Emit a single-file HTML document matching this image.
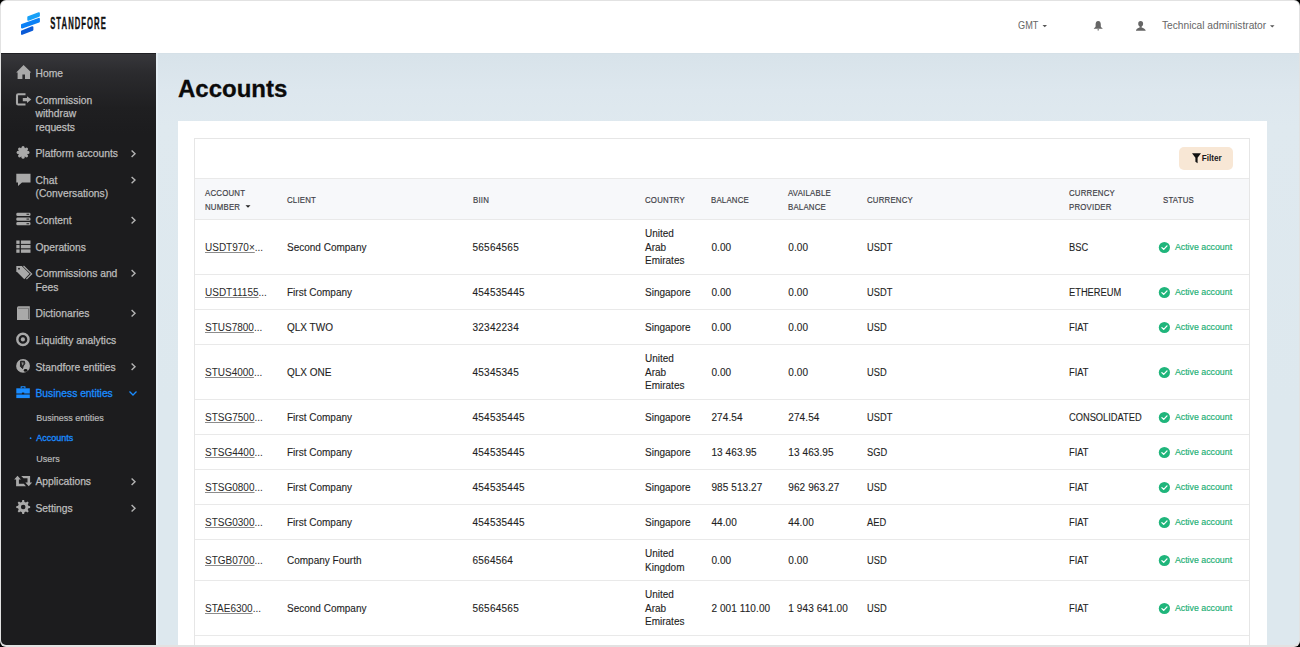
<!DOCTYPE html>
<html><head><meta charset="utf-8">
<style>
*{box-sizing:border-box;margin:0;padding:0}
html,body{width:1300px;height:647px;overflow:hidden;background:#000}
body{font-family:"Liberation Sans",sans-serif;position:relative}
.t{position:absolute;white-space:nowrap}
svg{position:absolute;left:0;top:0}
</style></head>
<body>
<div style="position:absolute;left:0px;top:0px;width:1300px;height:647px;background:#e2e2e2;border-radius:6px"></div>
<div style="position:absolute;left:1px;top:1px;width:1297.5px;height:644px;background:#dce6ed;border-radius:5px;overflow:hidden;background:linear-gradient(#d8e3ea 54px,#dde7ee 90px,#dfe9ef 125px,#dde8ee 400px)"></div>
<div style="position:absolute;left:1px;top:1px;width:1297.5px;height:51.5px;background:#ffffff;border-radius:5px 5px 0 0"></div>
<div style="position:absolute;left:1px;top:52.5px;width:155px;height:592.5px;background:#1c1c1e;border-bottom-left-radius:5px;background:linear-gradient(#38383c 0px,#2b2b2e 20px,#1f1f21 55px,#1c1c1e 80px)"></div>
<div style="position:absolute;left:156px;top:52.5px;width:2px;height:592.5px;background:#e4eef4;"></div>
<div style="position:absolute;left:158px;top:53px;width:1140.5px;height:1px;background:#d5e0e7;"></div>
<div style="position:absolute;left:1px;top:53px;width:155px;height:1px;background:#1f1f23;"></div>
<div class="t" style="left:178px;top:75.28px;font-size:24px;line-height:28px;color:#0b0b0b;font-weight:bold;-webkit-text-stroke:0.3px #0b0b0b;">Accounts</div>
<div style="position:absolute;left:178px;top:121px;width:1089px;height:524px;background:#ffffff;"></div>
<div style="position:absolute;left:194px;top:138px;width:1056px;height:1px;background:#e6e6e6;"></div>
<div style="position:absolute;left:194px;top:138px;width:1px;height:507px;background:#e6e6e6;"></div>
<div style="position:absolute;left:1249px;top:138px;width:1px;height:507px;background:#e6e6e6;"></div>
<div style="position:absolute;left:195px;top:178.5px;width:1054px;height:41px;background:#f7f8fa;"></div>
<div style="position:absolute;left:195px;top:178px;width:1054px;height:1px;background:#e9e9e9;"></div>
<div style="position:absolute;left:195px;top:219px;width:1054px;height:1px;background:#e9e9e9;"></div>
<div style="position:absolute;left:195px;top:274px;width:1054px;height:1px;background:#e9e9e9;"></div>
<div style="position:absolute;left:195px;top:309px;width:1054px;height:1px;background:#e9e9e9;"></div>
<div style="position:absolute;left:195px;top:344px;width:1054px;height:1px;background:#e9e9e9;"></div>
<div style="position:absolute;left:195px;top:399px;width:1054px;height:1px;background:#e9e9e9;"></div>
<div style="position:absolute;left:195px;top:434px;width:1054px;height:1px;background:#e9e9e9;"></div>
<div style="position:absolute;left:195px;top:469px;width:1054px;height:1px;background:#e9e9e9;"></div>
<div style="position:absolute;left:195px;top:504px;width:1054px;height:1px;background:#e9e9e9;"></div>
<div style="position:absolute;left:195px;top:539px;width:1054px;height:1px;background:#e9e9e9;"></div>
<div style="position:absolute;left:195px;top:580px;width:1054px;height:1px;background:#e9e9e9;"></div>
<div style="position:absolute;left:195px;top:635px;width:1054px;height:1px;background:#e9e9e9;"></div>
<div class="t" style="left:1017.8px;top:18.58px;font-size:10.2px;line-height:13.77px;color:#666;font-weight:normal;transform:scaleX(.9);transform-origin:0 0;">GMT</div>
<div class="t" style="left:1162px;top:18.88px;font-size:10.2px;line-height:13.77px;color:#666;font-weight:normal;">Technical administrator</div>
<div class="t" style="left:35.5px;top:67.28px;font-size:10.3px;line-height:13.91px;color:#bdbdbd;font-weight:normal;-webkit-text-stroke:0.25px #bdbdbd;">Home</div>
<div class="t" style="left:35.5px;top:93.58px;font-size:10.3px;line-height:13.91px;color:#bdbdbd;font-weight:normal;-webkit-text-stroke:0.25px #bdbdbd;">Commission</div>
<div class="t" style="left:35.5px;top:107.08px;font-size:10.3px;line-height:13.91px;color:#bdbdbd;font-weight:normal;-webkit-text-stroke:0.25px #bdbdbd;">withdraw</div>
<div class="t" style="left:35.5px;top:120.58px;font-size:10.3px;line-height:13.91px;color:#bdbdbd;font-weight:normal;-webkit-text-stroke:0.25px #bdbdbd;">requests</div>
<div class="t" style="left:35.5px;top:147.48px;font-size:10.3px;line-height:13.91px;color:#bdbdbd;font-weight:normal;-webkit-text-stroke:0.25px #bdbdbd;">Platform accounts</div>
<div class="t" style="left:35.5px;top:173.88px;font-size:10.3px;line-height:13.91px;color:#bdbdbd;font-weight:normal;-webkit-text-stroke:0.25px #bdbdbd;">Chat</div>
<div class="t" style="left:35.5px;top:187.38px;font-size:10.3px;line-height:13.91px;color:#bdbdbd;font-weight:normal;-webkit-text-stroke:0.25px #bdbdbd;">(Conversations)</div>
<div class="t" style="left:35.5px;top:213.98px;font-size:10.3px;line-height:13.91px;color:#bdbdbd;font-weight:normal;-webkit-text-stroke:0.25px #bdbdbd;">Content</div>
<div class="t" style="left:35.5px;top:241.08px;font-size:10.3px;line-height:13.91px;color:#bdbdbd;font-weight:normal;-webkit-text-stroke:0.25px #bdbdbd;">Operations</div>
<div class="t" style="left:35.5px;top:267.08px;font-size:10.3px;line-height:13.91px;color:#bdbdbd;font-weight:normal;-webkit-text-stroke:0.25px #bdbdbd;">Commissions and</div>
<div class="t" style="left:35.5px;top:280.58px;font-size:10.3px;line-height:13.91px;color:#bdbdbd;font-weight:normal;-webkit-text-stroke:0.25px #bdbdbd;">Fees</div>
<div class="t" style="left:35.5px;top:307.08px;font-size:10.3px;line-height:13.91px;color:#bdbdbd;font-weight:normal;-webkit-text-stroke:0.25px #bdbdbd;">Dictionaries</div>
<div class="t" style="left:35.5px;top:334.18px;font-size:10.3px;line-height:13.91px;color:#bdbdbd;font-weight:normal;-webkit-text-stroke:0.25px #bdbdbd;">Liquidity analytics</div>
<div class="t" style="left:35.5px;top:360.58px;font-size:10.3px;line-height:13.91px;color:#bdbdbd;font-weight:normal;-webkit-text-stroke:0.25px #bdbdbd;">Standfore entities</div>
<div class="t" style="left:35.5px;top:475.48px;font-size:10.3px;line-height:13.91px;color:#bdbdbd;font-weight:normal;-webkit-text-stroke:0.25px #bdbdbd;">Applications</div>
<div class="t" style="left:35.5px;top:502.08px;font-size:10.3px;line-height:13.91px;color:#bdbdbd;font-weight:normal;-webkit-text-stroke:0.25px #bdbdbd;">Settings</div>
<div class="t" style="left:35.5px;top:386.98px;font-size:10.3px;line-height:13.91px;color:#1a8cff;font-weight:normal;-webkit-text-stroke:0.3px #1a8cff;">Business entities</div>
<div class="t" style="left:36.3px;top:411.81px;font-size:9px;line-height:12.15px;color:#b8b8b8;font-weight:normal;-webkit-text-stroke:0.2px #b8b8b8;">Business entities</div>
<div class="t" style="left:36.3px;top:432.21px;font-size:9px;line-height:12.15px;color:#1a8cff;font-weight:normal;-webkit-text-stroke:0.3px #1a8cff;">Accounts</div>
<div class="t" style="left:36.3px;top:452.61px;font-size:9px;line-height:12.15px;color:#b8b8b8;font-weight:normal;-webkit-text-stroke:0.2px #b8b8b8;">Users</div>
<div style="position:absolute;left:1179.3px;top:146.6px;width:53.7px;height:23px;background:#f8e7d5;border-radius:5px"></div>
<div class="t" style="left:1201.7px;top:152.72px;font-size:8.2px;line-height:11.07px;color:#1a1a1a;font-weight:bold;">Filter</div>
<div class="t" style="left:205px;top:186.09px;font-size:9.8px;line-height:13.23px;color:#3f3f47;font-weight:normal;transform:scaleX(.8);transform-origin:0 0;letter-spacing:0.25px;-webkit-text-stroke:0.2px #3f3f47;">ACCOUNT</div>
<div class="t" style="left:205px;top:199.59px;font-size:9.8px;line-height:13.23px;color:#3f3f47;font-weight:normal;transform:scaleX(.8);transform-origin:0 0;letter-spacing:0.25px;-webkit-text-stroke:0.2px #3f3f47;">NUMBER</div>
<div class="t" style="left:287px;top:192.99px;font-size:9.8px;line-height:13.23px;color:#3f3f47;font-weight:normal;transform:scaleX(.8);transform-origin:0 0;letter-spacing:0.25px;-webkit-text-stroke:0.2px #3f3f47;">CLIENT</div>
<div class="t" style="left:472.5px;top:192.99px;font-size:9.8px;line-height:13.23px;color:#3f3f47;font-weight:normal;transform:scaleX(.8);transform-origin:0 0;letter-spacing:0.25px;-webkit-text-stroke:0.2px #3f3f47;">BIIN</div>
<div class="t" style="left:645px;top:192.99px;font-size:9.8px;line-height:13.23px;color:#3f3f47;font-weight:normal;transform:scaleX(.8);transform-origin:0 0;letter-spacing:0.25px;-webkit-text-stroke:0.2px #3f3f47;">COUNTRY</div>
<div class="t" style="left:711.4px;top:192.99px;font-size:9.8px;line-height:13.23px;color:#3f3f47;font-weight:normal;transform:scaleX(.8);transform-origin:0 0;letter-spacing:0.25px;-webkit-text-stroke:0.2px #3f3f47;">BALANCE</div>
<div class="t" style="left:788.3px;top:186.09px;font-size:9.8px;line-height:13.23px;color:#3f3f47;font-weight:normal;transform:scaleX(.8);transform-origin:0 0;letter-spacing:0.25px;-webkit-text-stroke:0.2px #3f3f47;">AVAILABLE</div>
<div class="t" style="left:788.3px;top:199.59px;font-size:9.8px;line-height:13.23px;color:#3f3f47;font-weight:normal;transform:scaleX(.8);transform-origin:0 0;letter-spacing:0.25px;-webkit-text-stroke:0.2px #3f3f47;">BALANCE</div>
<div class="t" style="left:866.8px;top:192.99px;font-size:9.8px;line-height:13.23px;color:#3f3f47;font-weight:normal;transform:scaleX(.8);transform-origin:0 0;letter-spacing:0.25px;-webkit-text-stroke:0.2px #3f3f47;">CURRENCY</div>
<div class="t" style="left:1068.5px;top:186.09px;font-size:9.8px;line-height:13.23px;color:#3f3f47;font-weight:normal;transform:scaleX(.8);transform-origin:0 0;letter-spacing:0.25px;-webkit-text-stroke:0.2px #3f3f47;">CURRENCY</div>
<div class="t" style="left:1068.5px;top:199.59px;font-size:9.8px;line-height:13.23px;color:#3f3f47;font-weight:normal;transform:scaleX(.8);transform-origin:0 0;letter-spacing:0.25px;-webkit-text-stroke:0.2px #3f3f47;">PROVIDER</div>
<div class="t" style="left:1162.6px;top:192.99px;font-size:9.8px;line-height:13.23px;color:#3f3f47;font-weight:normal;transform:scaleX(.8);transform-origin:0 0;letter-spacing:0.25px;-webkit-text-stroke:0.2px #3f3f47;">STATUS</div>
<div class="t" style="left:205px;top:240.84px;font-size:10px;line-height:13.5px;color:#2a2a2a;font-weight:normal;"><span style="text-decoration:underline;text-decoration-color:#8c8c8c;text-underline-offset:0.6px">USDT970×</span>...</div>
<div class="t" style="left:287px;top:240.84px;font-size:10px;line-height:13.5px;color:#1f1f1f;font-weight:normal;-webkit-text-stroke:0.12px #1f1f1f;">Second Company</div>
<div class="t" style="left:472.5px;top:240.84px;font-size:10px;line-height:13.5px;color:#1f1f1f;font-weight:normal;-webkit-text-stroke:0.12px #1f1f1f;letter-spacing:0.25px">56564565</div>
<div class="t" style="left:645px;top:227.34px;font-size:10px;line-height:13.5px;color:#1f1f1f;font-weight:normal;-webkit-text-stroke:0.12px #1f1f1f;">United</div>
<div class="t" style="left:645px;top:240.84px;font-size:10px;line-height:13.5px;color:#1f1f1f;font-weight:normal;-webkit-text-stroke:0.12px #1f1f1f;">Arab</div>
<div class="t" style="left:645px;top:254.34px;font-size:10px;line-height:13.5px;color:#1f1f1f;font-weight:normal;-webkit-text-stroke:0.12px #1f1f1f;">Emirates</div>
<div class="t" style="left:711.4px;top:240.84px;font-size:10px;line-height:13.5px;color:#1f1f1f;font-weight:normal;-webkit-text-stroke:0.12px #1f1f1f;letter-spacing:0.1px">0.00</div>
<div class="t" style="left:788.3px;top:240.84px;font-size:10px;line-height:13.5px;color:#1f1f1f;font-weight:normal;-webkit-text-stroke:0.12px #1f1f1f;letter-spacing:0.1px">0.00</div>
<div class="t" style="left:866.8px;top:240.84px;font-size:10px;line-height:13.5px;color:#1f1f1f;font-weight:normal;-webkit-text-stroke:0.12px #1f1f1f;transform:scaleX(.93);transform-origin:0 0;">USDT</div>
<div class="t" style="left:1068.5px;top:240.84px;font-size:10px;line-height:13.5px;color:#1f1f1f;font-weight:normal;-webkit-text-stroke:0.12px #1f1f1f;transform:scaleX(.93);transform-origin:0 0;">BSC</div>
<div class="t" style="left:1174.9px;top:242.06px;font-size:8.8px;line-height:11.88px;color:#18ae72;font-weight:normal;-webkit-text-stroke:0.15px #18ae72">Active account</div>
<div class="t" style="left:205px;top:285.84px;font-size:10px;line-height:13.5px;color:#2a2a2a;font-weight:normal;"><span style="text-decoration:underline;text-decoration-color:#8c8c8c;text-underline-offset:0.6px">USDT11155</span>...</div>
<div class="t" style="left:287px;top:285.84px;font-size:10px;line-height:13.5px;color:#1f1f1f;font-weight:normal;-webkit-text-stroke:0.12px #1f1f1f;">First Company</div>
<div class="t" style="left:472.5px;top:285.84px;font-size:10px;line-height:13.5px;color:#1f1f1f;font-weight:normal;-webkit-text-stroke:0.12px #1f1f1f;letter-spacing:0.25px">454535445</div>
<div class="t" style="left:645px;top:285.84px;font-size:10px;line-height:13.5px;color:#1f1f1f;font-weight:normal;-webkit-text-stroke:0.12px #1f1f1f;">Singapore</div>
<div class="t" style="left:711.4px;top:285.84px;font-size:10px;line-height:13.5px;color:#1f1f1f;font-weight:normal;-webkit-text-stroke:0.12px #1f1f1f;letter-spacing:0.1px">0.00</div>
<div class="t" style="left:788.3px;top:285.84px;font-size:10px;line-height:13.5px;color:#1f1f1f;font-weight:normal;-webkit-text-stroke:0.12px #1f1f1f;letter-spacing:0.1px">0.00</div>
<div class="t" style="left:866.8px;top:285.84px;font-size:10px;line-height:13.5px;color:#1f1f1f;font-weight:normal;-webkit-text-stroke:0.12px #1f1f1f;transform:scaleX(.93);transform-origin:0 0;">USDT</div>
<div class="t" style="left:1068.5px;top:285.84px;font-size:10px;line-height:13.5px;color:#1f1f1f;font-weight:normal;-webkit-text-stroke:0.12px #1f1f1f;transform:scaleX(.93);transform-origin:0 0;">ETHEREUM</div>
<div class="t" style="left:1174.9px;top:287.06px;font-size:8.8px;line-height:11.88px;color:#18ae72;font-weight:normal;-webkit-text-stroke:0.15px #18ae72">Active account</div>
<div class="t" style="left:205px;top:320.84px;font-size:10px;line-height:13.5px;color:#2a2a2a;font-weight:normal;"><span style="text-decoration:underline;text-decoration-color:#8c8c8c;text-underline-offset:0.6px">STUS7800</span>...</div>
<div class="t" style="left:287px;top:320.84px;font-size:10px;line-height:13.5px;color:#1f1f1f;font-weight:normal;-webkit-text-stroke:0.12px #1f1f1f;">QLX TWO</div>
<div class="t" style="left:472.5px;top:320.84px;font-size:10px;line-height:13.5px;color:#1f1f1f;font-weight:normal;-webkit-text-stroke:0.12px #1f1f1f;letter-spacing:0.25px">32342234</div>
<div class="t" style="left:645px;top:320.84px;font-size:10px;line-height:13.5px;color:#1f1f1f;font-weight:normal;-webkit-text-stroke:0.12px #1f1f1f;">Singapore</div>
<div class="t" style="left:711.4px;top:320.84px;font-size:10px;line-height:13.5px;color:#1f1f1f;font-weight:normal;-webkit-text-stroke:0.12px #1f1f1f;letter-spacing:0.1px">0.00</div>
<div class="t" style="left:788.3px;top:320.84px;font-size:10px;line-height:13.5px;color:#1f1f1f;font-weight:normal;-webkit-text-stroke:0.12px #1f1f1f;letter-spacing:0.1px">0.00</div>
<div class="t" style="left:866.8px;top:320.84px;font-size:10px;line-height:13.5px;color:#1f1f1f;font-weight:normal;-webkit-text-stroke:0.12px #1f1f1f;transform:scaleX(.93);transform-origin:0 0;">USD</div>
<div class="t" style="left:1068.5px;top:320.84px;font-size:10px;line-height:13.5px;color:#1f1f1f;font-weight:normal;-webkit-text-stroke:0.12px #1f1f1f;transform:scaleX(.93);transform-origin:0 0;">FIAT</div>
<div class="t" style="left:1174.9px;top:322.06px;font-size:8.8px;line-height:11.88px;color:#18ae72;font-weight:normal;-webkit-text-stroke:0.15px #18ae72">Active account</div>
<div class="t" style="left:205px;top:365.84px;font-size:10px;line-height:13.5px;color:#2a2a2a;font-weight:normal;"><span style="text-decoration:underline;text-decoration-color:#8c8c8c;text-underline-offset:0.6px">STUS4000</span>...</div>
<div class="t" style="left:287px;top:365.84px;font-size:10px;line-height:13.5px;color:#1f1f1f;font-weight:normal;-webkit-text-stroke:0.12px #1f1f1f;">QLX ONE</div>
<div class="t" style="left:472.5px;top:365.84px;font-size:10px;line-height:13.5px;color:#1f1f1f;font-weight:normal;-webkit-text-stroke:0.12px #1f1f1f;letter-spacing:0.25px">45345345</div>
<div class="t" style="left:645px;top:352.34px;font-size:10px;line-height:13.5px;color:#1f1f1f;font-weight:normal;-webkit-text-stroke:0.12px #1f1f1f;">United</div>
<div class="t" style="left:645px;top:365.84px;font-size:10px;line-height:13.5px;color:#1f1f1f;font-weight:normal;-webkit-text-stroke:0.12px #1f1f1f;">Arab</div>
<div class="t" style="left:645px;top:379.34px;font-size:10px;line-height:13.5px;color:#1f1f1f;font-weight:normal;-webkit-text-stroke:0.12px #1f1f1f;">Emirates</div>
<div class="t" style="left:711.4px;top:365.84px;font-size:10px;line-height:13.5px;color:#1f1f1f;font-weight:normal;-webkit-text-stroke:0.12px #1f1f1f;letter-spacing:0.1px">0.00</div>
<div class="t" style="left:788.3px;top:365.84px;font-size:10px;line-height:13.5px;color:#1f1f1f;font-weight:normal;-webkit-text-stroke:0.12px #1f1f1f;letter-spacing:0.1px">0.00</div>
<div class="t" style="left:866.8px;top:365.84px;font-size:10px;line-height:13.5px;color:#1f1f1f;font-weight:normal;-webkit-text-stroke:0.12px #1f1f1f;transform:scaleX(.93);transform-origin:0 0;">USD</div>
<div class="t" style="left:1068.5px;top:365.84px;font-size:10px;line-height:13.5px;color:#1f1f1f;font-weight:normal;-webkit-text-stroke:0.12px #1f1f1f;transform:scaleX(.93);transform-origin:0 0;">FIAT</div>
<div class="t" style="left:1174.9px;top:367.06px;font-size:8.8px;line-height:11.88px;color:#18ae72;font-weight:normal;-webkit-text-stroke:0.15px #18ae72">Active account</div>
<div class="t" style="left:205px;top:410.84px;font-size:10px;line-height:13.5px;color:#2a2a2a;font-weight:normal;"><span style="text-decoration:underline;text-decoration-color:#8c8c8c;text-underline-offset:0.6px">STSG7500</span>...</div>
<div class="t" style="left:287px;top:410.84px;font-size:10px;line-height:13.5px;color:#1f1f1f;font-weight:normal;-webkit-text-stroke:0.12px #1f1f1f;">First Company</div>
<div class="t" style="left:472.5px;top:410.84px;font-size:10px;line-height:13.5px;color:#1f1f1f;font-weight:normal;-webkit-text-stroke:0.12px #1f1f1f;letter-spacing:0.25px">454535445</div>
<div class="t" style="left:645px;top:410.84px;font-size:10px;line-height:13.5px;color:#1f1f1f;font-weight:normal;-webkit-text-stroke:0.12px #1f1f1f;">Singapore</div>
<div class="t" style="left:711.4px;top:410.84px;font-size:10px;line-height:13.5px;color:#1f1f1f;font-weight:normal;-webkit-text-stroke:0.12px #1f1f1f;letter-spacing:0.1px">274.54</div>
<div class="t" style="left:788.3px;top:410.84px;font-size:10px;line-height:13.5px;color:#1f1f1f;font-weight:normal;-webkit-text-stroke:0.12px #1f1f1f;letter-spacing:0.1px">274.54</div>
<div class="t" style="left:866.8px;top:410.84px;font-size:10px;line-height:13.5px;color:#1f1f1f;font-weight:normal;-webkit-text-stroke:0.12px #1f1f1f;transform:scaleX(.93);transform-origin:0 0;">USDT</div>
<div class="t" style="left:1068.5px;top:410.84px;font-size:10px;line-height:13.5px;color:#1f1f1f;font-weight:normal;-webkit-text-stroke:0.12px #1f1f1f;transform:scaleX(.93);transform-origin:0 0;">CONSOLIDATED</div>
<div class="t" style="left:1174.9px;top:412.06px;font-size:8.8px;line-height:11.88px;color:#18ae72;font-weight:normal;-webkit-text-stroke:0.15px #18ae72">Active account</div>
<div class="t" style="left:205px;top:445.84px;font-size:10px;line-height:13.5px;color:#2a2a2a;font-weight:normal;"><span style="text-decoration:underline;text-decoration-color:#8c8c8c;text-underline-offset:0.6px">STSG4400</span>...</div>
<div class="t" style="left:287px;top:445.84px;font-size:10px;line-height:13.5px;color:#1f1f1f;font-weight:normal;-webkit-text-stroke:0.12px #1f1f1f;">First Company</div>
<div class="t" style="left:472.5px;top:445.84px;font-size:10px;line-height:13.5px;color:#1f1f1f;font-weight:normal;-webkit-text-stroke:0.12px #1f1f1f;letter-spacing:0.25px">454535445</div>
<div class="t" style="left:645px;top:445.84px;font-size:10px;line-height:13.5px;color:#1f1f1f;font-weight:normal;-webkit-text-stroke:0.12px #1f1f1f;">Singapore</div>
<div class="t" style="left:711.4px;top:445.84px;font-size:10px;line-height:13.5px;color:#1f1f1f;font-weight:normal;-webkit-text-stroke:0.12px #1f1f1f;letter-spacing:0.1px">13 463.95</div>
<div class="t" style="left:788.3px;top:445.84px;font-size:10px;line-height:13.5px;color:#1f1f1f;font-weight:normal;-webkit-text-stroke:0.12px #1f1f1f;letter-spacing:0.1px">13 463.95</div>
<div class="t" style="left:866.8px;top:445.84px;font-size:10px;line-height:13.5px;color:#1f1f1f;font-weight:normal;-webkit-text-stroke:0.12px #1f1f1f;transform:scaleX(.93);transform-origin:0 0;">SGD</div>
<div class="t" style="left:1068.5px;top:445.84px;font-size:10px;line-height:13.5px;color:#1f1f1f;font-weight:normal;-webkit-text-stroke:0.12px #1f1f1f;transform:scaleX(.93);transform-origin:0 0;">FIAT</div>
<div class="t" style="left:1174.9px;top:447.06px;font-size:8.8px;line-height:11.88px;color:#18ae72;font-weight:normal;-webkit-text-stroke:0.15px #18ae72">Active account</div>
<div class="t" style="left:205px;top:480.84px;font-size:10px;line-height:13.5px;color:#2a2a2a;font-weight:normal;"><span style="text-decoration:underline;text-decoration-color:#8c8c8c;text-underline-offset:0.6px">STSG0800</span>...</div>
<div class="t" style="left:287px;top:480.84px;font-size:10px;line-height:13.5px;color:#1f1f1f;font-weight:normal;-webkit-text-stroke:0.12px #1f1f1f;">First Company</div>
<div class="t" style="left:472.5px;top:480.84px;font-size:10px;line-height:13.5px;color:#1f1f1f;font-weight:normal;-webkit-text-stroke:0.12px #1f1f1f;letter-spacing:0.25px">454535445</div>
<div class="t" style="left:645px;top:480.84px;font-size:10px;line-height:13.5px;color:#1f1f1f;font-weight:normal;-webkit-text-stroke:0.12px #1f1f1f;">Singapore</div>
<div class="t" style="left:711.4px;top:480.84px;font-size:10px;line-height:13.5px;color:#1f1f1f;font-weight:normal;-webkit-text-stroke:0.12px #1f1f1f;letter-spacing:0.1px">985 513.27</div>
<div class="t" style="left:788.3px;top:480.84px;font-size:10px;line-height:13.5px;color:#1f1f1f;font-weight:normal;-webkit-text-stroke:0.12px #1f1f1f;letter-spacing:0.1px">962 963.27</div>
<div class="t" style="left:866.8px;top:480.84px;font-size:10px;line-height:13.5px;color:#1f1f1f;font-weight:normal;-webkit-text-stroke:0.12px #1f1f1f;transform:scaleX(.93);transform-origin:0 0;">USD</div>
<div class="t" style="left:1068.5px;top:480.84px;font-size:10px;line-height:13.5px;color:#1f1f1f;font-weight:normal;-webkit-text-stroke:0.12px #1f1f1f;transform:scaleX(.93);transform-origin:0 0;">FIAT</div>
<div class="t" style="left:1174.9px;top:482.06px;font-size:8.8px;line-height:11.88px;color:#18ae72;font-weight:normal;-webkit-text-stroke:0.15px #18ae72">Active account</div>
<div class="t" style="left:205px;top:515.83px;font-size:10px;line-height:13.5px;color:#2a2a2a;font-weight:normal;"><span style="text-decoration:underline;text-decoration-color:#8c8c8c;text-underline-offset:0.6px">STSG0300</span>...</div>
<div class="t" style="left:287px;top:515.83px;font-size:10px;line-height:13.5px;color:#1f1f1f;font-weight:normal;-webkit-text-stroke:0.12px #1f1f1f;">First Company</div>
<div class="t" style="left:472.5px;top:515.83px;font-size:10px;line-height:13.5px;color:#1f1f1f;font-weight:normal;-webkit-text-stroke:0.12px #1f1f1f;letter-spacing:0.25px">454535445</div>
<div class="t" style="left:645px;top:515.83px;font-size:10px;line-height:13.5px;color:#1f1f1f;font-weight:normal;-webkit-text-stroke:0.12px #1f1f1f;">Singapore</div>
<div class="t" style="left:711.4px;top:515.83px;font-size:10px;line-height:13.5px;color:#1f1f1f;font-weight:normal;-webkit-text-stroke:0.12px #1f1f1f;letter-spacing:0.1px">44.00</div>
<div class="t" style="left:788.3px;top:515.83px;font-size:10px;line-height:13.5px;color:#1f1f1f;font-weight:normal;-webkit-text-stroke:0.12px #1f1f1f;letter-spacing:0.1px">44.00</div>
<div class="t" style="left:866.8px;top:515.83px;font-size:10px;line-height:13.5px;color:#1f1f1f;font-weight:normal;-webkit-text-stroke:0.12px #1f1f1f;transform:scaleX(.93);transform-origin:0 0;">AED</div>
<div class="t" style="left:1068.5px;top:515.83px;font-size:10px;line-height:13.5px;color:#1f1f1f;font-weight:normal;-webkit-text-stroke:0.12px #1f1f1f;transform:scaleX(.93);transform-origin:0 0;">FIAT</div>
<div class="t" style="left:1174.9px;top:517.06px;font-size:8.8px;line-height:11.88px;color:#18ae72;font-weight:normal;-webkit-text-stroke:0.15px #18ae72">Active account</div>
<div class="t" style="left:205px;top:553.83px;font-size:10px;line-height:13.5px;color:#2a2a2a;font-weight:normal;"><span style="text-decoration:underline;text-decoration-color:#8c8c8c;text-underline-offset:0.6px">STGB0700</span>...</div>
<div class="t" style="left:287px;top:553.83px;font-size:10px;line-height:13.5px;color:#1f1f1f;font-weight:normal;-webkit-text-stroke:0.12px #1f1f1f;">Company Fourth</div>
<div class="t" style="left:472.5px;top:553.83px;font-size:10px;line-height:13.5px;color:#1f1f1f;font-weight:normal;-webkit-text-stroke:0.12px #1f1f1f;letter-spacing:0.25px">6564564</div>
<div class="t" style="left:645px;top:547.08px;font-size:10px;line-height:13.5px;color:#1f1f1f;font-weight:normal;-webkit-text-stroke:0.12px #1f1f1f;">United</div>
<div class="t" style="left:645px;top:560.58px;font-size:10px;line-height:13.5px;color:#1f1f1f;font-weight:normal;-webkit-text-stroke:0.12px #1f1f1f;">Kingdom</div>
<div class="t" style="left:711.4px;top:553.83px;font-size:10px;line-height:13.5px;color:#1f1f1f;font-weight:normal;-webkit-text-stroke:0.12px #1f1f1f;letter-spacing:0.1px">0.00</div>
<div class="t" style="left:788.3px;top:553.83px;font-size:10px;line-height:13.5px;color:#1f1f1f;font-weight:normal;-webkit-text-stroke:0.12px #1f1f1f;letter-spacing:0.1px">0.00</div>
<div class="t" style="left:866.8px;top:553.83px;font-size:10px;line-height:13.5px;color:#1f1f1f;font-weight:normal;-webkit-text-stroke:0.12px #1f1f1f;transform:scaleX(.93);transform-origin:0 0;">USD</div>
<div class="t" style="left:1068.5px;top:553.83px;font-size:10px;line-height:13.5px;color:#1f1f1f;font-weight:normal;-webkit-text-stroke:0.12px #1f1f1f;transform:scaleX(.93);transform-origin:0 0;">FIAT</div>
<div class="t" style="left:1174.9px;top:555.06px;font-size:8.8px;line-height:11.88px;color:#18ae72;font-weight:normal;-webkit-text-stroke:0.15px #18ae72">Active account</div>
<div class="t" style="left:205px;top:601.83px;font-size:10px;line-height:13.5px;color:#2a2a2a;font-weight:normal;"><span style="text-decoration:underline;text-decoration-color:#8c8c8c;text-underline-offset:0.6px">STAE6300</span>...</div>
<div class="t" style="left:287px;top:601.83px;font-size:10px;line-height:13.5px;color:#1f1f1f;font-weight:normal;-webkit-text-stroke:0.12px #1f1f1f;">Second Company</div>
<div class="t" style="left:472.5px;top:601.83px;font-size:10px;line-height:13.5px;color:#1f1f1f;font-weight:normal;-webkit-text-stroke:0.12px #1f1f1f;letter-spacing:0.25px">56564565</div>
<div class="t" style="left:645px;top:588.33px;font-size:10px;line-height:13.5px;color:#1f1f1f;font-weight:normal;-webkit-text-stroke:0.12px #1f1f1f;">United</div>
<div class="t" style="left:645px;top:601.83px;font-size:10px;line-height:13.5px;color:#1f1f1f;font-weight:normal;-webkit-text-stroke:0.12px #1f1f1f;">Arab</div>
<div class="t" style="left:645px;top:615.33px;font-size:10px;line-height:13.5px;color:#1f1f1f;font-weight:normal;-webkit-text-stroke:0.12px #1f1f1f;">Emirates</div>
<div class="t" style="left:711.4px;top:601.83px;font-size:10px;line-height:13.5px;color:#1f1f1f;font-weight:normal;-webkit-text-stroke:0.12px #1f1f1f;letter-spacing:0.1px">2 001 110.00</div>
<div class="t" style="left:788.3px;top:601.83px;font-size:10px;line-height:13.5px;color:#1f1f1f;font-weight:normal;-webkit-text-stroke:0.12px #1f1f1f;letter-spacing:0.1px">1 943 641.00</div>
<div class="t" style="left:866.8px;top:601.83px;font-size:10px;line-height:13.5px;color:#1f1f1f;font-weight:normal;-webkit-text-stroke:0.12px #1f1f1f;transform:scaleX(.93);transform-origin:0 0;">USD</div>
<div class="t" style="left:1068.5px;top:601.83px;font-size:10px;line-height:13.5px;color:#1f1f1f;font-weight:normal;-webkit-text-stroke:0.12px #1f1f1f;transform:scaleX(.93);transform-origin:0 0;">FIAT</div>
<div class="t" style="left:1174.9px;top:603.06px;font-size:8.8px;line-height:11.88px;color:#18ae72;font-weight:normal;-webkit-text-stroke:0.15px #18ae72">Active account</div>
<svg width="1300" height="647" viewBox="0 0 1300 647">
<polygon points="28.3,17.3 38.9,13.2 38.9,15.7 28.3,19.8" fill="#17a0f7" stroke="#17a0f7" stroke-width="2" stroke-linejoin="round"/>
<polygon points="22.0,24.9 38.9,18.9 38.9,21.5 22.0,27.5" fill="#0a80f6" stroke="#0a80f6" stroke-width="2" stroke-linejoin="round"/>
<polygon points="22.0,31.4 32.4,27.2 32.4,29.7 22.0,33.9" fill="#0a5bd7" stroke="#0a5bd7" stroke-width="2" stroke-linejoin="round"/>
<text transform="translate(50.2,28.7) scale(0.48,1)" font-family="Liberation Sans" font-weight="bold" font-size="16" letter-spacing="2.2" fill="#111" stroke="#111" stroke-width="0.35">STANDFORE</text>
<polygon points="1042.5,25 1047,25 1044.75,27.3" fill="#555"/>
<path d="M1098.2,21.1 C1096.3,21.1 1095.6,22.8 1095.6,24.6 L1095.6,26.2 C1095.6,27.1 1095,27.6 1093.9,28.2 L1093.9,28.7 L1102.5,28.7 L1102.5,28.2 C1101.4,27.6 1100.8,27.1 1100.8,26.2 L1100.8,24.6 C1100.8,22.8 1100.1,21.1 1098.2,21.1Z" fill="#666"/><rect x="1097.5" y="29.1" width="1.5" height="1.4" fill="#888"/>
<ellipse cx="1140.65" cy="23.7" rx="2.45" ry="2.6" fill="#666"/><rect x="1139.6" y="25.8" width="2.1" height="2" fill="#666"/><path d="M1136,30.7 L1136,30.2 C1136.5,28.7 1138,28 1139.5,27.4 L1141.8,27.4 C1143.3,28 1144.8,28.7 1145.6,30.2 L1145.6,30.7Z" fill="#666"/>
<polygon points="1270,25.3 1274.5,25.3 1272.25,27.5" fill="#555"/>
<polyline points="131.6,150.5 135,153.7 131.6,156.89999999999998" fill="none" stroke="#b4b4b4" stroke-width="1.4"/>
<polyline points="131.6,176.9 135,180.1 131.6,183.29999999999998" fill="none" stroke="#b4b4b4" stroke-width="1.4"/>
<polyline points="131.6,217.0 135,220.2 131.6,223.39999999999998" fill="none" stroke="#b4b4b4" stroke-width="1.4"/>
<polyline points="131.6,270.1 135,273.3 131.6,276.5" fill="none" stroke="#b4b4b4" stroke-width="1.4"/>
<polyline points="131.6,310.1 135,313.3 131.6,316.5" fill="none" stroke="#b4b4b4" stroke-width="1.4"/>
<polyline points="131.6,363.6 135,366.8 131.6,370.0" fill="none" stroke="#b4b4b4" stroke-width="1.4"/>
<polyline points="131.6,478.5 135,481.7 131.6,484.9" fill="none" stroke="#b4b4b4" stroke-width="1.4"/>
<polyline points="131.6,505.1 135,508.3 131.6,511.5" fill="none" stroke="#b4b4b4" stroke-width="1.4"/>
<polyline points="129.5,391.5 133,395 136.5,391.5" fill="none" stroke="#1a8cff" stroke-width="1.3"/>
<circle cx="30.6" cy="438.2" r="0.9" fill="#1a8cff"/>
<path d="M23.6,65 L16.2,72.4 H17.6 V79 H22.4 V74.4 H25 V79 H30 V72.4 H31.3 Z" fill="#a9a9a9"/>
<path d="M25.5,94.3 H18.2 Q17,94.3 17,95.5 V103.3 Q17,104.5 18.2,104.5 H25.5" fill="none" stroke="#a9a9a9" stroke-width="2.1"/>
<path d="M22.8,98 H27 V96.2 L31.3,99.6 L27,103 V101.2 H22.8Z" fill="#a9a9a9"/>
<circle cx="23.05" cy="152.4" r="4.7" fill="#a9a9a9"/>
<circle cx="23.05" cy="147.50" r="1.55" fill="#a9a9a9"/>
<circle cx="26.51" cy="148.94" r="1.55" fill="#a9a9a9"/>
<circle cx="27.95" cy="152.40" r="1.55" fill="#a9a9a9"/>
<circle cx="26.51" cy="155.86" r="1.55" fill="#a9a9a9"/>
<circle cx="23.05" cy="157.30" r="1.55" fill="#a9a9a9"/>
<circle cx="19.59" cy="155.86" r="1.55" fill="#a9a9a9"/>
<circle cx="18.15" cy="152.40" r="1.55" fill="#a9a9a9"/>
<circle cx="19.59" cy="148.94" r="1.55" fill="#a9a9a9"/>
<path d="M16.3,173.7 H30.5 V182.6 H22 L18,186 V182.6 H16.3Z" fill="#a9a9a9"/>
<rect x="16.3" y="212.7" width="14.2" height="3.2" rx="1.2" fill="#a9a9a9"/><rect x="26.5" y="213.7" width="2.6" height="1.2" fill="#333"/>
<rect x="16.3" y="217.5" width="14.2" height="3.2" rx="1.2" fill="#a9a9a9"/><rect x="26.5" y="218.5" width="2.6" height="1.2" fill="#333"/>
<rect x="16.3" y="222.1" width="14.2" height="3.2" rx="1.2" fill="#a9a9a9"/><rect x="26.5" y="223.1" width="2.6" height="1.2" fill="#333"/>
<rect x="16.3" y="240.5" width="3.3" height="3.4" fill="#a9a9a9"/><rect x="20.9" y="240.5" width="9.6" height="3.4" fill="#a9a9a9"/>
<rect x="16.3" y="244.9" width="3.3" height="3.4" fill="#a9a9a9"/><rect x="20.9" y="244.9" width="9.6" height="3.4" fill="#a9a9a9"/>
<rect x="16.3" y="249.4" width="3.3" height="3.4" fill="#a9a9a9"/><rect x="20.9" y="249.4" width="9.6" height="3.4" fill="#a9a9a9"/>
<path d="M16.3,266 H21.8 L29.6,273.8 L24.3,279.2 L16.3,271.3Z" fill="#a9a9a9"/><circle cx="19" cy="268.7" r="0.9" fill="#1c1c1e"/>
<path d="M23.5,266 L31.6,273.9 L26.4,279.2" fill="none" stroke="#a9a9a9" stroke-width="1.2"/>
<path d="M18.5,306.3 H29.8 V320 H17 V308 Q17,306.3 18.5,306.3Z" fill="#a9a9a9"/><path d="M18.2,308.3 H28.5 V319" fill="none" stroke="#6e6e6e" stroke-width="0.9"/>
<circle cx="22.9" cy="339.4" r="5.6" fill="none" stroke="#a9a9a9" stroke-width="2.4"/><circle cx="22.9" cy="339.4" r="2.1" fill="#a9a9a9"/>
<circle cx="23.05" cy="365.9" r="6.9" fill="#a9a9a9"/>
<path d="M20.6,361.2 L24.5,361.3 L24.8,363.6 L23.2,366.2 L22.6,368.6 L20.4,366.5 Z" fill="#2a2a2a" stroke="#1c1c1e" stroke-width="0.9" stroke-linejoin="round"/>
<path d="M21.4,362.3 L23.6,362.4 L23.4,364.4 L22.3,365.6 Z" fill="#8a8a8a"/>
<ellipse cx="25.6" cy="370.4" rx="1.9" ry="1.4" fill="#141414"/>
<path d="M20.6,388.3 V386.6 Q20.6,386.2 21,386.2 H25.1 Q25.5,386.2 25.5,386.6 V388.3 H24.3 V387.3 H21.8 V388.3Z" fill="#1a8cff"/><rect x="16.3" y="388.3" width="13.5" height="5.2" fill="#1a8cff"/><rect x="16.3" y="394.5" width="13.5" height="3.6" fill="#1a8cff"/><rect x="21.9" y="392.6" width="2.3" height="1.6" fill="#1c1c1e"/>
<path d="M14.2,479.6 L17.5,475.7 L20.9,479.6 H18.9 V483.8 H23.8 L26,486.2 H16.1 V479.6Z" fill="#a9a9a9"/>
<path d="M21.2,475.9 H30.1 V482.6 H32.2 L28.75,486.3 L25.3,482.6 H27.5 V478.3 H23.5Z" fill="#a9a9a9"/>
<path d="M21.94,501.90 L22.29,500.11 L24.11,500.11 L24.46,501.90 L25.95,502.52 L27.47,501.50 L28.75,502.78 L27.73,504.30 L28.35,505.79 L30.14,506.14 L30.14,507.96 L28.35,508.31 L27.73,509.80 L28.75,511.32 L27.47,512.60 L25.95,511.58 L24.46,512.20 L24.11,513.99 L22.29,513.99 L21.94,512.20 L20.45,511.58 L18.93,512.60 L17.65,511.32 L18.67,509.80 L18.05,508.31 L16.26,507.96 L16.26,506.14 L18.05,505.79 L18.67,504.30 L17.65,502.78 L18.93,501.50 L20.45,502.52Z M25.5,507.05 A2.3,2.3 0 1 0 20.9,507.05 A2.3,2.3 0 1 0 25.5,507.05Z" fill="#a9a9a9" fill-rule="evenodd"/>
<path d="M1192,153.3 H1201 L1197.6,157.8 V163.2 L1195.4,161.8 V157.8Z" fill="#111"/>
<polygon points="245.5,205.3 250.5,205.3 248,207.8" fill="#222"/>
<circle cx="1164.4" cy="247.50" r="5.6" fill="#1fb57b"/><polyline points="1161.9,247.60 1163.7,249.40 1167,245.90" fill="none" stroke="#fff" stroke-width="1.3" stroke-linecap="round" stroke-linejoin="round"/>
<circle cx="1164.4" cy="292.50" r="5.6" fill="#1fb57b"/><polyline points="1161.9,292.60 1163.7,294.40 1167,290.90" fill="none" stroke="#fff" stroke-width="1.3" stroke-linecap="round" stroke-linejoin="round"/>
<circle cx="1164.4" cy="327.50" r="5.6" fill="#1fb57b"/><polyline points="1161.9,327.60 1163.7,329.40 1167,325.90" fill="none" stroke="#fff" stroke-width="1.3" stroke-linecap="round" stroke-linejoin="round"/>
<circle cx="1164.4" cy="372.50" r="5.6" fill="#1fb57b"/><polyline points="1161.9,372.60 1163.7,374.40 1167,370.90" fill="none" stroke="#fff" stroke-width="1.3" stroke-linecap="round" stroke-linejoin="round"/>
<circle cx="1164.4" cy="417.50" r="5.6" fill="#1fb57b"/><polyline points="1161.9,417.60 1163.7,419.40 1167,415.90" fill="none" stroke="#fff" stroke-width="1.3" stroke-linecap="round" stroke-linejoin="round"/>
<circle cx="1164.4" cy="452.50" r="5.6" fill="#1fb57b"/><polyline points="1161.9,452.60 1163.7,454.40 1167,450.90" fill="none" stroke="#fff" stroke-width="1.3" stroke-linecap="round" stroke-linejoin="round"/>
<circle cx="1164.4" cy="487.50" r="5.6" fill="#1fb57b"/><polyline points="1161.9,487.60 1163.7,489.40 1167,485.90" fill="none" stroke="#fff" stroke-width="1.3" stroke-linecap="round" stroke-linejoin="round"/>
<circle cx="1164.4" cy="522.50" r="5.6" fill="#1fb57b"/><polyline points="1161.9,522.60 1163.7,524.40 1167,520.90" fill="none" stroke="#fff" stroke-width="1.3" stroke-linecap="round" stroke-linejoin="round"/>
<circle cx="1164.4" cy="560.50" r="5.6" fill="#1fb57b"/><polyline points="1161.9,560.60 1163.7,562.40 1167,558.90" fill="none" stroke="#fff" stroke-width="1.3" stroke-linecap="round" stroke-linejoin="round"/>
<circle cx="1164.4" cy="608.50" r="5.6" fill="#1fb57b"/><polyline points="1161.9,608.60 1163.7,610.40 1167,606.90" fill="none" stroke="#fff" stroke-width="1.3" stroke-linecap="round" stroke-linejoin="round"/>
</svg>
</body></html>
